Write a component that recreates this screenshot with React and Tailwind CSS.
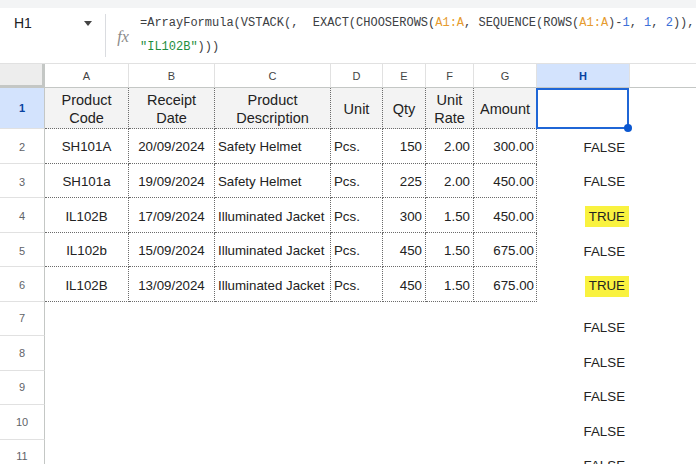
import React from "react";

const rows = [
  ["SH101A", "20/09/2024", "Safety Helmet", "Pcs.", "150", "2.00", "300.00", "FALSE"],
  ["SH101a", "19/09/2024", "Safety Helmet", "Pcs.", "225", "2.00", "450.00", "FALSE"],
  ["IL102B", "17/09/2024", "Illuminated Jacket", "Pcs.", "300", "1.50", "450.00", "TRUE"],
  ["IL102b", "15/09/2024", "Illuminated Jacket", "Pcs.", "450", "1.50", "675.00", "FALSE"],
  ["IL102B", "13/09/2024", "Illuminated Jacket", "Pcs.", "450", "1.50", "675.00", "TRUE"],
];

// alignment per data column A..G
const align = [
  "justify-center",
  "justify-center",
  "justify-start pl-[3px]",
  "justify-start pl-[3px]",
  "justify-end pr-[3px]",
  "justify-end pr-[3px]",
  "justify-end pr-[2px]",
];

const gridCols = "grid grid-cols-[45px_84px_86px_116px_52px_43px_48px_63px_92px_1fr]";

function RowNum({ n, active, shift }) {
  return (
    <div
      className={
        "flex items-center justify-center border-r border-b border-r-[#c4c7c5] border-b-[#e1e1e1] text-[11px] " +
        (shift ? "pt-[3px] " : "") +
        (active ? "bg-[#d3e3fd] text-[#0842a0] font-bold" : "bg-white text-[#5f6368]")
      }
    >
      {n}
    </div>
  );
}

function BoolCell({ value, bottom }) {
  return (
    <div className={"flex justify-end " + (bottom ? "items-end leading-[17px]" : "items-center pt-[3px]")}>
      {value === "TRUE" ? (
        <span className="bg-[#f9f23f] h-[21px] px-[4px] flex items-center">TRUE</span>
      ) : (
        <span className="pr-[4px]">{value}</span>
      )}
    </div>
  );
}

export default function App() {
  const letters = ["A", "B", "C", "D", "E", "F", "G"];
  const headers = [
    ["Product", "Code"],
    ["Receipt", "Date"],
    ["Product", "Description"],
    ["Unit"],
    ["Qty"],
    ["Unit", "Rate"],
    ["Amount"],
  ];

  return (
    <div className="w-[696px] h-[464px] overflow-hidden bg-white text-[#222] font-['Liberation_Sans',Arial,sans-serif]">
      {/* formula bar */}
      <div className="h-[8px] bg-[#f3f4f5]" />
      <div className="h-[56px] flex border-b border-[#e1e1e1]">
        <div className="w-[105px] flex items-start pt-[6px] pl-[14px] pr-[13px] justify-between">
          <span className="text-[14px] leading-[18px] text-[#202124]">H1</span>
          <svg width="8" height="5" viewBox="0 0 8 5" className="mt-[7px]">
            <path d="M0 0h8L4 5z" fill="#444" />
          </svg>
        </div>
        <div className="w-px bg-[#dadce0] my-[6px]" />
        <div className="w-[34px] flex items-center justify-center pt-[2px]">
          <span className="font-['Liberation_Serif',serif] italic text-[16px] text-[#8a8a8a]">fx</span>
        </div>
        <div className="font-['Liberation_Mono','DejaVu_Sans_Mono',monospace] text-[12px] leading-[24px] text-[#3c4043] whitespace-pre pt-[3px]">
          <div>
            =ArrayFormula(VSTACK(,  EXACT(CHOOSEROWS(<span className="text-[#e69b2e]">A1:A</span>, SEQUENCE(ROWS(
            <span className="text-[#e69b2e]">A1:A</span>)-<span className="text-[#3b6fd8]">1</span>,{" "}
            <span className="text-[#3b6fd8]">1</span>, <span className="text-[#3b6fd8]">2</span>)),
          </div>
          <div>
            <span className="text-[#1e8e3e]">"IL102B"</span>)))
          </div>
        </div>
      </div>

      {/* column headers */}
      <div className={gridCols + " h-[24px] text-[11px] text-[#444]"}>
        <div className="bg-[#ededed] border-r-[3px] border-b-[3px] border-[#c4c7c5]" />
        {letters.map((l) => (
          <div key={l} className="flex items-center justify-center pt-[2px] border-r border-b border-r-[#e1e1e1] border-b-[#c4c7c5]">
            {l}
          </div>
        ))}
        <div className="flex items-center justify-center pt-[2px] bg-[#d3e3fd] font-bold text-[#0842a0] border-b border-[#c4c7c5]">
          H
        </div>
        <div className="border-b border-l border-[#e1e1e1] border-b-[#c4c7c5]" />
      </div>

      {/* row 1 */}
      <div className={gridCols + " h-[41px]"}>
        <RowNum n={1} active />
        {headers.map((h, i) => (
          <div
            key={i}
            className="flex flex-col items-center justify-center pt-[2px] bg-[#f3f3f3] border-r border-b border-dotted border-[#6b6b6b] text-[14.5px] leading-[18px]"
          >
            {h.map((t) => (
              <span key={t}>{t}</span>
            ))}
          </div>
        ))}
        <div className="relative border-2 border-[#1f66d6] -ml-px">
          <span className="absolute -right-[5px] -bottom-[5px] w-[8px] h-[8px] rounded-full bg-[#0b57d0]" />
        </div>
        <div />
      </div>

      {/* data rows */}
      {rows.map((r, ri) => (
        <div key={ri} className={gridCols + " h-[34.6px] text-[13.3px]"}>
          <RowNum n={ri + 2} shift />
          {r.slice(0, 7).map((v, ci) => (
            <div key={ci} className={"flex items-center pt-[3px] border-r border-b border-dotted border-[#6b6b6b] " + align[ci]}>
              {v}
            </div>
          ))}
          <BoolCell value={r[7]} />
          <div />
        </div>
      ))}

      {/* rows 7+ */}
      {[7, 8, 9, 10, 11].map((n) => (
        <div key={n} className={gridCols + " h-[34.5px] text-[13.3px]"}>
          <RowNum n={n} />
          <div className="col-span-7" />
          <BoolCell value="FALSE" bottom />
          <div />
        </div>
      ))}
    </div>
  );
}
